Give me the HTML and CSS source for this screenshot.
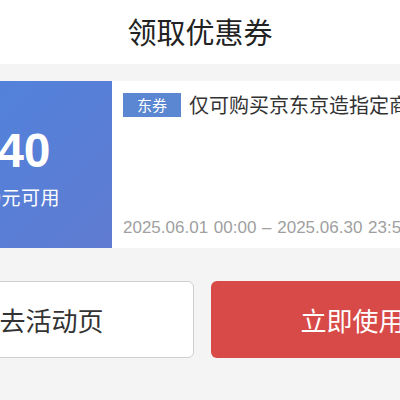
FILE: index.html
```html
<!DOCTYPE html>
<html lang="zh-CN">
<head>
  <meta charset="UTF-8" />
  <meta name="viewport" content="width=device-width, initial-scale=1.0"/>
  <title>领取优惠券</title>
  <link rel="stylesheet" href="styles.css">
</head>
<body>

  <div class="top-bar">领取优惠券</div>

  <main class="sheet">
    <div class="coupon">
      <div class="coupon-value">
        <div class="amount">¥40</div>
        <div class="limit">满199元可用</div>
      </div>
      <div class="coupon-info">
        <div class="title-row">
          <span class="tag">东券</span>
          <span class="desc">仅可购买京东京造指定商品</span>
        </div>
        <div class="period">2025.06.01 00:00 – 2025.06.30 23:59</div>
      </div>
    </div>

    <div class="actions">
      <button class="btn btn-ghost">去活动页</button>
      <button class="btn btn-primary">立即使用</button>
    </div>
  </main>

</body>
</html>
```

FILE: styles.css
```css
* { box-sizing: border-box; }
html, body {
  margin: 0; padding: 0;
  width: 400px; height: 400px;
  overflow: hidden;
  font-family: 'Noto Sans CJK SC', 'Noto Sans', sans-serif;
  background-color: #f4f4f4;
  color: #333;
}
.top-bar {
  height: 64px;
  background: #fff;
  display: flex;
  justify-content: center;
  align-items: center;
  font-size: 29px;
  color: #222;
  padding-bottom: 2px;
}
.sheet {
  width: 585px;
  margin-left: -91px;
}
.coupon {
  display: flex;
  height: 167px;
  margin-top: 17px;
  background: #fff;
}
.coupon-value {
  width: 203px;
  flex-shrink: 0;
  background: linear-gradient(135deg, #4f84de, #5f7bd1);
  color: #fff;
  display: flex;
  flex-direction: column;
  align-items: center;
  justify-content: center;
  padding-top: 4px;
}
.amount {
  font-family: 'Liberation Sans', 'Noto Sans', sans-serif;
  font-weight: bold;
  font-size: 48px;
  line-height: 54px;
}
.limit {
  font-size: 19px;
  line-height: 26px;
  margin-top: 6px;
  margin-right: 12px;
  letter-spacing: 0.5px;
}
.coupon-info {
  flex: 1;
  min-width: 0;
  padding: 9px 0 8px 11px;
  display: flex;
  flex-direction: column;
  justify-content: space-between;
}
.title-row {
  display: flex;
  align-items: center;
  white-space: nowrap;
}
.tag {
  background: #5a86d2;
  color: #fff;
  font-size: 15px;
  line-height: 24px;
  padding: 0 14px;
}
.desc {
  margin-left: 8px;
  font-size: 20px;
  color: #333;
}
.period {
  font-family: 'Liberation Sans', 'Noto Sans', sans-serif;
  font-size: 17px;
  color: #a0a0a0;
  white-space: nowrap;
  line-height: 24px;
  word-spacing: 1px;
}
.actions {
  display: flex;
  gap: 17px;
  margin-top: 33px;
}
.btn {
  flex: 1;
  height: 77px;
  border-radius: 6px;
  font-family: inherit;
  font-size: 26px;
  cursor: pointer;
}
.btn-ghost {
  background: #fff;
  border: 1px solid #cfcfcf;
  color: #333;
}
.btn-primary {
  background: #d84a48;
  border: none;
  color: #fff;
}
```
